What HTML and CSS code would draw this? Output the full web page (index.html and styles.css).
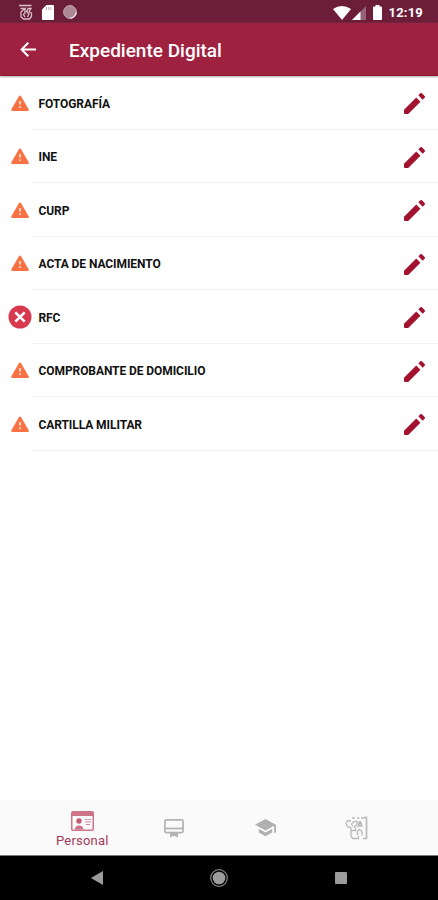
FILE: index.html
```html
<!DOCTYPE html>
<html lang="es">

<head>
    <meta charset="UTF-8">
    <meta name="viewport" content="width=device-width, initial-scale=1.0">
    <title>Expediente Digital</title>
    <link rel="stylesheet" href="styles.css">
</head>

<body>

    <!-- shared icons -->
    <svg class="sprite">
        <symbol id="warning" viewBox="0 0 18 17">
            <path d="M9 1.8 L16.5 14.8 H1.5 Z" fill="#fa7244" stroke="#fa7244" stroke-width="2.6" stroke-linejoin="round"/>
            <path d="M9 6v3.4M9 11.2v1.800" stroke="#fde0d4" stroke-width="1.7"/>
        </symbol>
        <symbol id="error" viewBox="0 0 24 24">
            <circle cx="12" cy="12" r="11.5" fill="#d8394f"/>
            <path d="M7.3 7.3l9.400 9.400M16.700 7.300l-9.400 9.400" stroke="#fff" stroke-width="2.6"/>
        </symbol>
        <symbol id="pencil" viewBox="3 3 18 18">
            <path d="M3 17.400V20.200q0 .8.800.8H6.600L17.100 10.500 13.500 6.900zM20.700 7q.6-.7 0-1.400L18.400 3.300q-.7-.6-1.400 0L15.300 5l3.700 3.700z" fill="#a3122f"/>
        </symbol>
    </svg>

    <div class="status-bar">
        <div class="status-left">
            <svg width="15" height="16" viewBox="0 0 15 16" fill="none" stroke="#d9bfc8" stroke-width="1.3">
                <path d="M1 1.500h12.500M2.500 4.500h4.500L3 8v5l2.500 2h6l2-2.500V9L11 7.500l2-3H9.500M7 5v4l-1.500 1.500L7 13M10 5L8.500 7.500 11 10l-1.500 3"/>
            </svg>
            <svg width="12" height="15" viewBox="0 0 12 15">
                <path d="M4.500 0H11q1 0 1 1v13q0 1-1 1H1q-1 0-1-1V4.500z" fill="#fff"/>
                <path d="M4.500 2v3M6.700 2v3M8.900 2v3" stroke="#c9a9b5"/>
            </svg>
            <svg width="14" height="14" viewBox="0 0 14 14">
                <circle cx="7" cy="7" r="6.400" fill="#ac8895" stroke="#c6abb5"/>
                <path d="M13 7.500A6 6 0 0 1 7.500 13" fill="none" stroke="#f1e4e8" stroke-width="1.400"/>
            </svg>
        </div>
        <div class="status-right">
            <svg width="18" height="14" viewBox="0 0 18 14">
                <path d="M0 3Q9-3 18 3L9 14z" fill="#fff"/>
            </svg>
            <svg class="signal" width="14" height="14" viewBox="0 0 14 14">
                <path d="M14 0v14H0z" fill="#946176"/>
                <path d="M8.500 5.500V14H0z" fill="#fff"/>
            </svg>
            <svg class="battery" width="9" height="15" viewBox="0 0 9 15">
                <path d="M2.500 0h4v1.500H8q1 0 1 1V14q0 1-1 1H1q-1 0-1-1V2.500q0-1 1-1h1.500z" fill="#fff"/>
            </svg>
            <span class="clock">12:19</span>
        </div>
    </div>

    <header class="app-bar">
        <svg width="16" height="15" viewBox="0 0 16 15" fill="none" stroke="#fff" stroke-width="2">
            <path d="M16 7.500H1.500M8.300 .8L1.600 7.500l6.700 6.700"/>
        </svg>
        <h1>Expediente Digital</h1>
    </header>

    <ul class="doc-list">
        <li class="doc">
            <span class="state"><svg class="warning"><use href="#warning"/></svg></span>
            <div class="doc-body"><span class="doc-name">FOTOGRAFÍA</span><svg class="edit"><use href="#pencil"/></svg></div>
        </li>
        <li class="doc">
            <span class="state"><svg class="warning"><use href="#warning"/></svg></span>
            <div class="doc-body"><span class="doc-name">INE</span><svg class="edit"><use href="#pencil"/></svg></div>
        </li>
        <li class="doc">
            <span class="state"><svg class="warning"><use href="#warning"/></svg></span>
            <div class="doc-body"><span class="doc-name">CURP</span><svg class="edit"><use href="#pencil"/></svg></div>
        </li>
        <li class="doc">
            <span class="state"><svg class="warning"><use href="#warning"/></svg></span>
            <div class="doc-body"><span class="doc-name">ACTA DE NACIMIENTO</span><svg class="edit"><use href="#pencil"/></svg></div>
        </li>
        <li class="doc">
            <span class="state"><svg class="error"><use href="#error"/></svg></span>
            <div class="doc-body"><span class="doc-name">RFC</span><svg class="edit"><use href="#pencil"/></svg></div>
        </li>
        <li class="doc">
            <span class="state"><svg class="warning"><use href="#warning"/></svg></span>
            <div class="doc-body"><span class="doc-name">COMPROBANTE DE DOMICILIO</span><svg class="edit"><use href="#pencil"/></svg></div>
        </li>
        <li class="doc">
            <span class="state"><svg class="warning"><use href="#warning"/></svg></span>
            <div class="doc-body"><span class="doc-name">CARTILLA MILITAR</span><svg class="edit"><use href="#pencil"/></svg></div>
        </li>
    </ul>

    <nav class="tabs">
        <div class="tab active">
            <svg width="23" height="20" viewBox="0 0 23 20">
                <rect x=".75" y=".75" width="21.500" height="18.500" rx="1.200" fill="none" stroke="#cd7489" stroke-width="1.500"/>
                <path d="M1 1h21v4H1zM4 18.500q0-4 4-4t4.500 4z" fill="#cd7489"/>
                <circle cx="8" cy="10" r="2.700" fill="#c25c75"/>
                <path d="M14 8.500h2.500M17.500 8.500H20M14 11h6M15 13.500h4" stroke="#d48798" stroke-width="1.200"/>
            </svg>
            <span>Personal</span>
        </div>
        <div class="tab">
            <svg width="20" height="19" viewBox="0 0 20 19">
                <rect x=".9" y=".9" width="18.200" height="12.700" rx="1.500" fill="none" stroke="#b3b3b3" stroke-width="1.700"/>
                <path d="M1 9.500h18" stroke="#b3b3b3" stroke-width="1.700"/>
                <path d="M6 14h8v4.500l-4-1.800-4 1.800z" fill="#b3b3b3"/>
            </svg>
        </div>
        <div class="tab">
            <svg width="21" height="18" viewBox="0 0 21 18" fill="#b0b0b0">
                <path d="M10.500 0L21 5.700v8h-1.900V6.800L10.500 11.400 0 5.700z"/>
                <path d="M3.800 9.800l6.700 3.600 6.700-3.600v3.800l-6.700 3.700-6.700-3.700z"/>
            </svg>
        </div>
        <div class="tab">
            <svg width="23" height="24" viewBox="0 0 23 24" fill="none" stroke="#b9b9b9" stroke-width="1.300">
                <path d="M7 2h3M12 2h2.500M16 2h3"/>
                <path d="M19 1.500h2.500v21H18" stroke-width="1.700"/>
                <path d="M6 5L3 4.500 1 7l1.500 4L6 11.500M6 11.500v9L8 22.500h5.500V20M6 14.500h4.500v-3"/>
                <path d="M8 10.500L6.500 8 9 5.500h3v3l-3 3M13 10l2-4 2 4zM12.500 19v-4l2-1.500 2.500 2v4"/>
                <path d="M13.500 5.500h3v3h-3z" fill="#b0b0b0" stroke="none"/>
            </svg>
        </div>
    </nav>

    <div class="system-nav">
        <svg width="12" height="14" viewBox="0 0 12 14"><path d="M12 0v14L0 7z" fill="#9c9c9c"/></svg>
        <svg width="18" height="18" viewBox="0 0 18 18">
            <circle cx="9" cy="9" r="8.300" fill="none" stroke="#858585" stroke-width="1.200"/>
            <circle cx="9" cy="9" r="6.300" fill="#9c9c9c"/>
        </svg>
        <svg width="12" height="12" viewBox="0 0 12 12"><rect width="12" height="12" rx="1" fill="#9c9c9c"/></svg>
    </div>

</body>

</html>
```

FILE: styles.css
```css
* {
    box-sizing: border-box;
}

body {
    margin: 0;
    height: 900px;
    display: flex;
    flex-direction: column;
    font-family: Roboto, "Liberation Sans", sans-serif;
    background-color: #fff;
    overflow: hidden;
}

svg {
    display: block;
    flex: none;
}

.sprite {
    position: absolute;
    width: 0;
    height: 0;
}

.status-bar {
    height: 23px;
    padding: 1px 15px 0 18px;
    display: flex;
    justify-content: space-between;
    background-color: #6c1d38;
}

.status-left,
.status-right {
    display: flex;
    align-items: center;
}

.status-left {
    gap: 9px;
}

.status-right {
    padding-top: 1px;
}

.signal {
    margin-left: 1px;
}

.battery {
    margin-left: 7px;
}

.clock {
    margin-left: 7px;
    color: #fff;
    font-size: 13px;
    font-weight: bold;
    letter-spacing: 0.2px;
}

.app-bar {
    height: 53px;
    padding-left: 20px;
    display: flex;
    align-items: center;
    gap: 33px;
    background-color: #9e2140;
    border-bottom: 1px solid #8c1731;
    box-shadow: 0 1px 2px #aaa;
}

.app-bar h1 {
    margin: 3px 0 0;
    color: #fff;
    font-size: 19px;
    font-weight: 500;
}

.doc-list {
    flex: 1;
    margin: 0;
    padding: 0;
    list-style: none;
}

.doc {
    height: 53.5px;
    display: flex;
}

.state {
    width: 32px;
    padding: 1px 0 0 7px;
    display: flex;
    align-items: center;
    justify-content: center;
}

.warning {
    width: 18px;
    height: 17px;
}

.error {
    width: 24px;
    height: 24px;
}

.doc-body {
    flex: 1;
    padding: 3px 13px 0 6.5px;
    display: flex;
    align-items: center;
    justify-content: space-between;
    border-bottom: 1.5px solid #f2f2f2;
}

.doc-name {
    color: #111;
    font-size: 12px;
    font-weight: bold;
    letter-spacing: -0.08px;
}

.edit {
    width: 21px;
    height: 21px;
}

.tabs {
    height: 55px;
    padding: 0 35.5px 0 36.5px;
    display: flex;
    background-color: #fafafa;
    border-top: 1px solid #fcfcfc;
}

.tab {
    flex: 1;
    display: flex;
    flex-direction: column;
    align-items: center;
    justify-content: center;
}

.tab.active {
    gap: 2px;
    padding-top: 3px;
    color: #a23a58;
    font-size: 13px;
    letter-spacing: 0.2px;
}

.system-nav {
    height: 45px;
    padding: 0 91px;
    display: flex;
    align-items: center;
    justify-content: space-between;
    background-color: #000;
    border-top: 1px solid #777;
}
```
